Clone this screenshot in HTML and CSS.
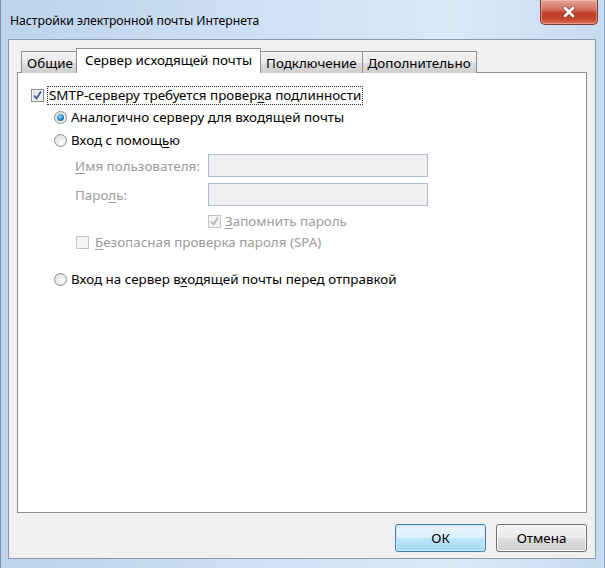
FILE: index.html
```html
<!DOCTYPE html>
<html lang="ru">
<head>
  <meta charset="UTF-8" />
  <title>Настройки электронной почты Интернета</title>
  <link rel="stylesheet" href="styles.css">
</head>
<body>
  <div class="window">
    <div class="titlebar">
      <span class="title">Настройки электронной почты Интернета</span>
      <div class="close-btn">
        <svg width="16" height="12" viewBox="0 0 16 12">
          <path d="M4 2 L12 10 M12 2 L4 10" stroke="#6a3530" stroke-width="4.4" stroke-linecap="round" opacity="0.5" />
          <path d="M4 2 L12 10 M12 2 L4 10" stroke="#fff" stroke-width="2.6" stroke-linecap="round" />
        </svg>
      </div>
    </div>

    <div class="client">
      <div class="tabs">
        <div class="tab">Общие</div>
        <div class="tab active">Сервер исходящей почты</div>
        <div class="tab">Подключение</div>
        <div class="tab">Дополнительно</div>
      </div>

      <div class="panel">
        <div class="row row-auth">
          <span class="check checked">
            <svg width="9" height="9" viewBox="0 0 9 9"><path d="M1 4.5 L3.5 7.5 L8 0.5" fill="none" stroke="#3d5a98" stroke-width="1.8" /></svg>
          </span>
          <span class="label focus">SMTP-серверу требуется провер<u>к</u>а подлинности</span>
        </div>

        <div class="row row-radio">
          <span class="radio selected"></span>
          <span class="label">Анало<u>г</u>ично серверу для входящей почты</span>
        </div>

        <div class="row row-radio row-login">
          <span class="radio"></span>
          <span class="label">Вход с помощ<u>ь</u>ю</span>
        </div>

        <div class="field field-user">
          <span class="field-label"><u>И</u>мя пользователя:</span>
          <span class="input"></span>
        </div>

        <div class="field field-pass">
          <span class="field-label">Паро<u>л</u>ь:</span>
          <span class="input"></span>
        </div>

        <div class="row row-remember">
          <span class="check checked disabled">
            <svg width="9" height="9" viewBox="0 0 9 9"><path d="M1 4.5 L3.5 7.5 L8 0.5" fill="none" stroke="#b4b4b4" stroke-width="1.8" /></svg>
          </span>
          <span class="label"><u>З</u>апомнить пароль</span>
        </div>

        <div class="row row-spa">
          <span class="check disabled"></span>
          <span class="label muted"><u>Б</u>езопасная проверка пароля (SPA)</span>
        </div>

        <div class="row row-radio row-before">
          <span class="radio"></span>
          <span class="label">Вход на сервер в<u>х</u>одящей почты перед отправкой</span>
        </div>
      </div>

      <div class="buttons">
        <div class="btn btn-default">ОК</div>
        <div class="btn">Отмена</div>
      </div>
    </div>
  </div>
</body>
</html>
```

FILE: styles.css
```css
* {
  box-sizing: border-box;
  margin: 0;
  padding: 0;
}

body {
  background: #c9dcf0;
  font-family: 'Noto Sans', 'Segoe UI', sans-serif;
  font-size: 13.4px;
  color: #000;
}

u {
  text-decoration: underline;
  text-underline-offset: 2px;
}

.window {
  width: 605px;
  height: 568px;
  background: linear-gradient(to right, #bcd3ec, #cfe1f4 45%, #dbe9f7 75%, #c6dbf0);
  border-left: 1px solid #7d93ad;
  border-right: 1px solid #8ea6c0;
  display: flex;
  flex-direction: column;
}

.titlebar {
  height: 39px;
  display: flex;
  justify-content: space-between;
  align-items: flex-start;
  padding-left: 9px;
}

.title {
  font-size: 12.2px;
  line-height: 1;
  margin-top: 15px;
}

.close-btn {
  width: 58px;
  height: 25px;
  margin-right: 6px;
  border: 1px solid #7b3a33;
  border-top: none;
  border-radius: 0 0 5px 5px;
  background: linear-gradient(#e6a497, #d0705f 40%, #c13d26 55%, #c8472e 80%, #d9705a);
  box-shadow: inset 0 0 0 1px rgba(255, 210, 200, 0.45);
  display: flex;
  align-items: center;
  justify-content: center;
}

.client {
  flex: 1;
  margin: 0 8px 9px 7px;
  background: #f0f0f0;
  border: 1px solid #8a99ad;
  padding: 8px 8px 6px 8px;
  display: flex;
  flex-direction: column;
}

.tabs {
  display: flex;
  align-items: flex-end;
  padding-left: 4px;
  height: 25px;
  margin-bottom: -1px;
  position: relative;
  z-index: 1;
}

.tab {
  height: 22px;
  padding: 0 5px;
  border: 1px solid #8e8f8f;
  border-bottom: none;
  background: linear-gradient(#f3f3f3, #ebebeb 50%, #dddddd 51%, #cfcfcf);
  display: flex;
  align-items: center;
  margin-right: -1px;
  white-space: nowrap;
}

.tab.active {
  height: 25px;
  background: #fff;
  padding: 0 8px 2px 8px;
  margin: 0 -1px 0 -2px;
  position: relative;
  z-index: 2;
}

.panel {
  height: 441px;
  background: #fff;
  border: 1px solid #8e8f8f;
  padding: 11px 0 0 13px;
}

.row {
  display: flex;
  align-items: center;
  height: 22px;
}

.row-radio {
  margin-left: 23px;
}

.row-login {
  margin-top: 1px;
}

.row-before {
  margin-top: 15px;
}

.label {
  margin-left: 4px;
  white-space: nowrap;
}

.label.focus {
  margin-left: 3px;
  padding: 1px 1px;
  border: 1px dotted #333;
  line-height: 15px;
}

.muted,
.field-label,
.row-remember .label {
  color: #9b9b9b;
}

.check {
  width: 13px;
  height: 13px;
  border: 1px solid #8e8f8f;
  background: linear-gradient(135deg, #dcdcdc, #fbfbfb);
  box-shadow: inset 0 0 0 1px #f4f4f4;
  display: flex;
  align-items: center;
  justify-content: center;
}

.check.disabled {
  border-color: #c4c4c4;
  background: #f4f4f4;
  box-shadow: none;
}

.radio {
  width: 13px;
  height: 13px;
  border-radius: 50%;
  border: 1px solid #8e8f8f;
  background: radial-gradient(circle at 60% 65%, #fdfdfd, #e3e3e3 70%, #d4d4d4);
  display: flex;
  align-items: center;
  justify-content: center;
}

.radio.selected::after {
  content: "";
  width: 7px;
  height: 7px;
  border-radius: 50%;
  background: radial-gradient(circle at 40% 35%, #9fd9fb, #2c8fd0 45%, #0e4c8d);
}

.field {
  display: flex;
  align-items: center;
  height: 23px;
  margin-left: 44px;
}

.field-user {
  margin-top: 3px;
}

.field-pass {
  margin-top: 6px;
}

.field-label {
  width: 133px;
}

.input {
  width: 220px;
  height: 23px;
  border: 1px solid #adbccf;
  background: #f0f0f0;
}

.row-remember {
  margin-left: 177px;
  margin-top: 4px;
}

.row-spa {
  margin-left: 45px;
  margin-top: -1px;
}

.row-spa .label {
  margin-left: 6px;
}

.buttons {
  display: flex;
  justify-content: flex-end;
  gap: 10px;
  margin-top: 11px;
}

.btn {
  width: 91px;
  height: 28px;
  border: 1px solid #707070;
  border-radius: 3px;
  background: linear-gradient(#f2f2f2, #ebebeb 50%, #dddddd 51%, #cfcfcf);
  box-shadow: inset 0 0 0 1px #fcfcfc;
  display: flex;
  align-items: center;
  justify-content: center;
}

.btn-default {
  border-color: #3c7fb1;
  background: linear-gradient(#eaf6fd, #d9f0fc 50%, #bee6fd 51%, #a7d9f5);
  box-shadow: inset 0 0 0 1px #cdeafa;
}
```
